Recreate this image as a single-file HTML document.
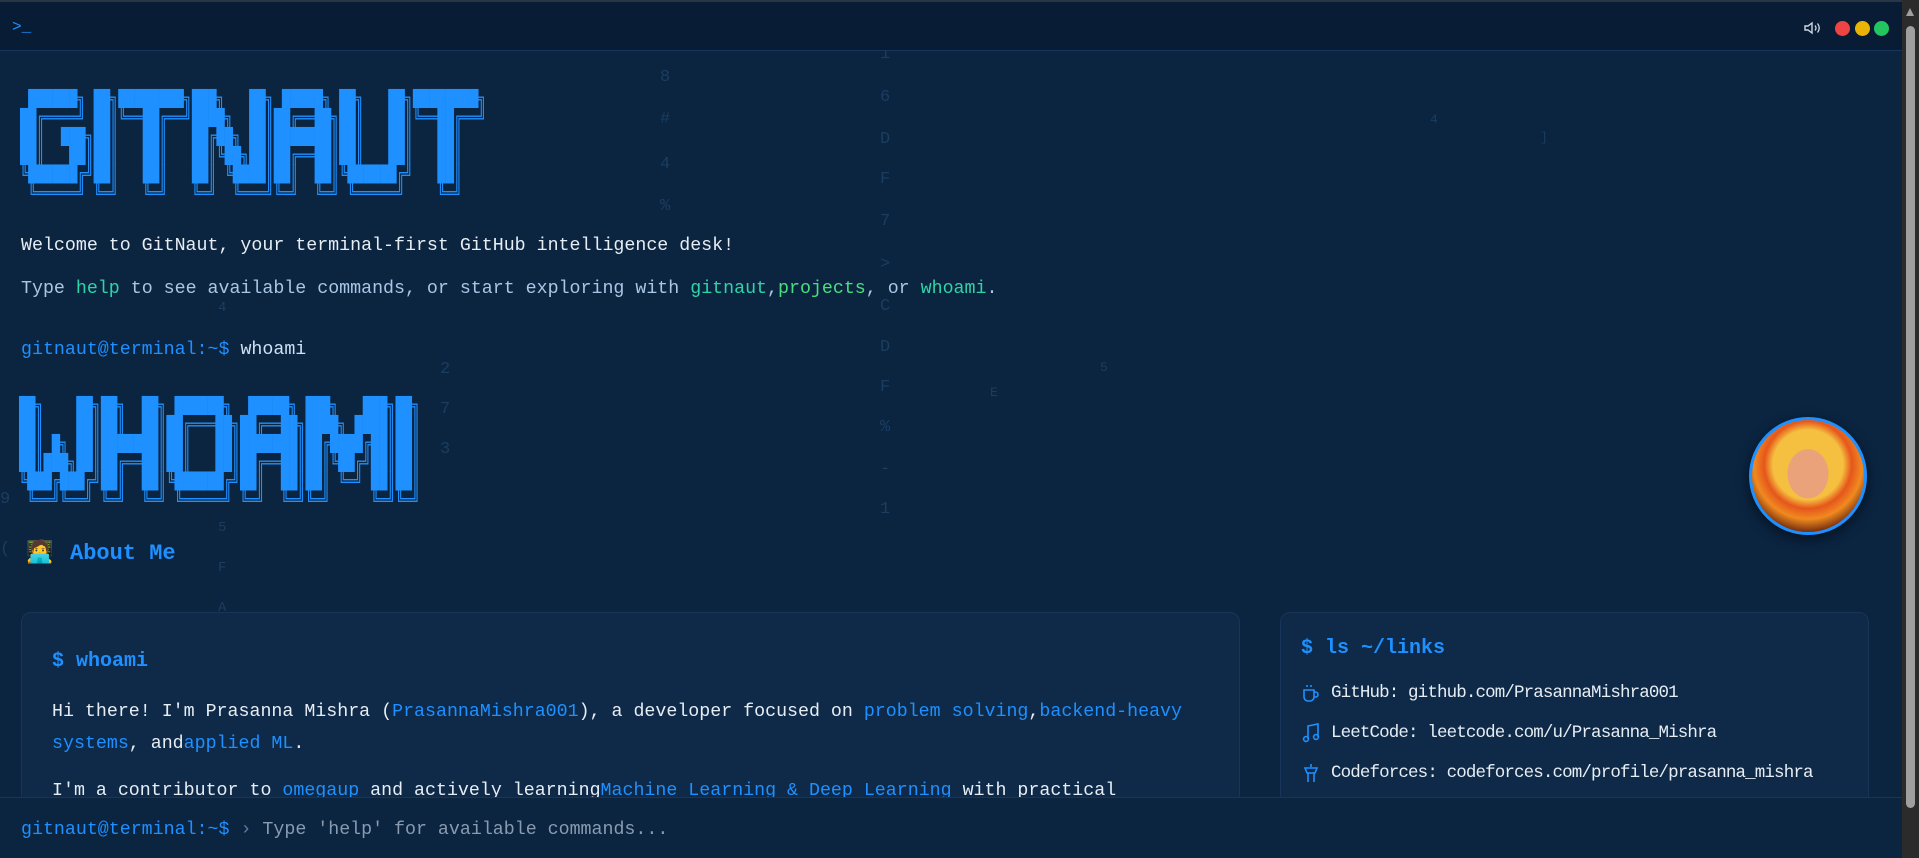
<!DOCTYPE html>
<html><head><meta charset="utf-8"><style>
*{margin:0;padding:0;box-sizing:border-box}
html,body{width:1919px;height:858px;overflow:hidden;background:#0b2440}
body{position:relative;font-family:"Liberation Mono","DejaVu Sans Mono",monospace;font-size:18.3px;color:#e6edf3}
.hdr{position:absolute;left:0;top:0;width:1902px;height:51px;background:#081c35;border-bottom:1px solid #17365c;border-top:2px solid #2a3645}
.sb{position:absolute;right:0;top:0;width:17px;height:858px;background:#2b2b2b}
.sb .th{position:absolute;left:4px;top:26px;width:9px;height:782px;background:#9f9f9f;border-radius:5px}
.sb .up{position:absolute;left:4px;top:8px;width:0;height:0;border-left:4.5px solid transparent;border-right:4.5px solid transparent;border-bottom:8px solid #9f9f9f}
.dot{position:absolute;top:19px;width:15px;height:15px;border-radius:50%}
.art{position:absolute;left:20px;font-family:"DejaVu Sans Mono",monospace;font-size:13.6px;line-height:16px;color:#1e90ff;white-space:pre;transform:scaleY(1.18);transform-origin:0 0}
.t{position:absolute;left:21px;white-space:pre;line-height:22px}
.card{position:absolute;top:612px;background:#0f2a48;border:1px solid #173558;border-radius:10px}
.bar{position:absolute;left:0;top:797px;width:1902px;height:61px;background:#0b2440;border-top:1px solid #17365c}
.bl{color:#1e90ff}.tl{color:#2dd4a8}.gr{color:#4ade80}
.bg{position:absolute;color:#1a3d60;font-size:17px}
.lk{position:absolute;left:50px;white-space:nowrap;font-size:17.5px;letter-spacing:-0.87px;line-height:22px}
</style></head><body>
<div class="bg" style="left:770px;top:28px">$</div><div class="bg" style="left:880px;top:5px">B</div>
<div class="bg" style="left:660px;top:30px">C</div><div class="bg" style="left:660px;top:68px">8</div>
<div class="bg" style="left:660px;top:110px">#</div><div class="bg" style="left:660px;top:155px">4</div>
<div class="bg" style="left:660px;top:197px">%</div><div class="bg" style="left:880px;top:45px">1</div>
<div class="bg" style="left:880px;top:88px">6</div><div class="bg" style="left:880px;top:130px">D</div>
<div class="bg" style="left:880px;top:170px">F</div><div class="bg" style="left:880px;top:212px">7</div>
<div class="bg" style="left:880px;top:255px">&gt;</div><div class="bg" style="left:880px;top:297px">C</div>
<div class="bg" style="left:880px;top:338px">D</div><div class="bg" style="left:880px;top:378px">F</div>
<div class="bg" style="left:880px;top:418px">%</div><div class="bg" style="left:880px;top:460px">-</div>
<div class="bg" style="left:880px;top:500px">1</div><div class="bg" style="left:1318px;top:12px">9</div>
<div class="bg" style="left:1430px;top:112px;font-size:13px">4</div><div class="bg" style="left:1540px;top:130px;font-size:13px">]</div>
<div class="bg" style="left:440px;top:22px">]</div><div class="bg" style="left:440px;top:360px">2</div>
<div class="bg" style="left:440px;top:400px">7</div><div class="bg" style="left:440px;top:440px">3</div>
<div class="bg" style="left:218px;top:300px;font-size:14px">4</div><div class="bg" style="left:218px;top:520px;font-size:14px">5</div>
<div class="bg" style="left:218px;top:560px;font-size:14px">F</div><div class="bg" style="left:218px;top:600px;font-size:14px">A</div>
<div class="bg" style="left:218px;top:635px;font-size:14px">7</div><div class="bg" style="left:218px;top:670px;font-size:14px">D</div>
<div class="bg" style="left:1100px;top:360px;font-size:13px">5</div><div class="bg" style="left:990px;top:385px;font-size:13px">E</div>
<div class="bg" style="left:0px;top:490px">9</div><div class="bg" style="left:0px;top:540px">(</div>

<div class="hdr">
<div style="position:absolute;left:12px;top:16px;color:#1e90ff;font-size:16px">&gt;_</div>
<svg style="position:absolute;left:1804px;top:19px" width="18" height="14" viewBox="0 0 18 14"><path d="M1 5h3l4-3v10l-4-3H1z" fill="none" stroke="#cfd8e3" stroke-width="1.4"/><path d="M11 4.5q2 2.5 0 5M13.5 2.5q3.5 4.5 0 9" fill="none" stroke="#cfd8e3" stroke-width="1.3"/></svg>
<div class="dot" style="left:1835px;background:#ef4444"></div>
<div class="dot" style="left:1855px;background:#eab308"></div>
<div class="dot" style="left:1874px;background:#22c55e"></div>
</div>
<div class="sb"><div class="up"></div><div class="th"></div></div>

<div class="art" style="top:90px"> ██████╗ ██╗████████╗███╗   ██╗ █████╗ ██╗   ██╗████████╗
██╔════╝ ██║╚══██╔══╝████╗  ██║██╔══██╗██║   ██║╚══██╔══╝
██║  ███╗██║   ██║   ██╔██╗ ██║███████║██║   ██║   ██║
██║   ██║██║   ██║   ██║╚██╗██║██╔══██║██║   ██║   ██║
╚██████╔╝██║   ██║   ██║ ╚████║██║  ██║╚██████╔╝   ██║
 ╚═════╝ ╚═╝   ╚═╝   ╚═╝  ╚═══╝╚═╝  ╚═╝ ╚═════╝    ╚═╝</div>

<div class="t" style="top:235px">Welcome to GitNaut, your terminal-first GitHub intelligence desk!</div>
<div class="t" style="top:278px;color:#a9c6e4">Type <span class="tl">help</span> to see available commands, or start exploring with <span class="tl">gitnaut</span>,<span class="gr">projects</span>, or <span class="tl">whoami</span>.</div>
<div class="t" style="top:339px"><span class="bl">gitnaut@terminal:~$</span> <span style="color:#cfe0f2">whoami</span></div>

<div class="art" style="top:397px;left:19px">██╗    ██╗██╗  ██╗ ██████╗  █████╗ ███╗   ███╗██╗
██║    ██║██║  ██║██╔═══██╗██╔══██╗████╗ ████║██║
██║ █╗ ██║███████║██║   ██║███████║██╔████╔██║██║
██║███╗██║██╔══██║██║   ██║██╔══██║██║╚██╔╝██║██║
╚███╔███╔╝██║  ██║╚██████╔╝██║  ██║██║ ╚═╝ ██║██║
 ╚══╝╚══╝ ╚═╝  ╚═╝ ╚═════╝ ╚═╝  ╚═╝╚═╝     ╚═╝╚═╝</div>

<div style="position:absolute;left:26px;top:541px;font-size:22px;line-height:26px">🧑‍💻</div>
<div style="position:absolute;left:70px;top:541px;font-size:22px;font-weight:bold;color:#1e90ff;line-height:26px">About Me</div>

<div style="position:absolute;left:1749px;top:417px;width:118px;height:118px;border-radius:50%;border:3px solid #1e90ff;background:radial-gradient(ellipse 30% 36% at 50% 48%,#e9a27a 0 60%,transparent 62%),radial-gradient(circle at 50% 40%,#f5c040 0 40%,#e5561c 50%,#f08a20 62%,#5a1a0c 80%);box-shadow:0 4px 12px rgba(0,0,0,.5)"></div>

<div class="card" style="left:21px;width:1219px;height:260px">
<div style="position:absolute;left:30px;top:37px;font-size:20px;font-weight:bold;color:#1e90ff">$ whoami</div>
<div style="position:absolute;left:30px;top:83px;line-height:32px;width:1170px">Hi there! I'm Prasanna Mishra (<span class="bl">PrasannaMishra001</span>), a developer focused on <span class="bl">problem solving</span>,<span class="bl">backend-heavy systems</span>, and<span class="bl">applied ML</span>.</div>
<div style="position:absolute;left:30px;top:168px;white-space:pre">I'm a contributor to <span class="bl">omegaup</span> and actively learning<span class="bl">Machine Learning &amp; Deep Learning</span> with practical</div>
</div>

<div class="card" style="left:1280px;width:589px;height:260px">
<div style="position:absolute;left:20px;top:24px;font-size:20px;font-weight:bold;color:#1e90ff">$ ls ~/links</div>
<svg style="position:absolute;left:21px;top:70px" width="18" height="20" viewBox="0 0 18 20"><path d="M2 7h10v7a4 4 0 0 1-4 4H6a4 4 0 0 1-4-4zM12 9h1.5a2.5 2.5 0 0 1 0 5H12M5 2v2M9 2v2" fill="none" stroke="#1e90ff" stroke-width="1.6"/></svg>
<div class="lk" style="top:69px">GitHub: github.com/PrasannaMishra001</div>
<svg style="position:absolute;left:21px;top:110px" width="18" height="20" viewBox="0 0 18 20"><path d="M6 16V3l10-2v13" fill="none" stroke="#1e90ff" stroke-width="1.6"/><circle cx="4" cy="16" r="2.4" fill="none" stroke="#1e90ff" stroke-width="1.6"/><circle cx="14" cy="14" r="2.4" fill="none" stroke="#1e90ff" stroke-width="1.6"/></svg>
<div class="lk" style="top:109px">LeetCode: leetcode.com/u/Prasanna_Mishra</div>
<svg style="position:absolute;left:21px;top:150px" width="18" height="20" viewBox="0 0 18 20"><path d="M9 1v3M3 5h12l-2 5H5zM6 10v9M12 10v9" fill="none" stroke="#1e90ff" stroke-width="1.6"/></svg>
<div class="lk" style="top:149px">Codeforces: codeforces.com/profile/prasanna_mishra</div>
</div>

<div class="bar">
<div style="position:absolute;left:21px;top:22px;white-space:pre"><span class="bl">gitnaut@terminal:~$</span> <span style="color:#5b7da3">›</span> <span style="color:#8a9bb0">Type 'help' for available commands...</span></div>
</div>
</body></html>
